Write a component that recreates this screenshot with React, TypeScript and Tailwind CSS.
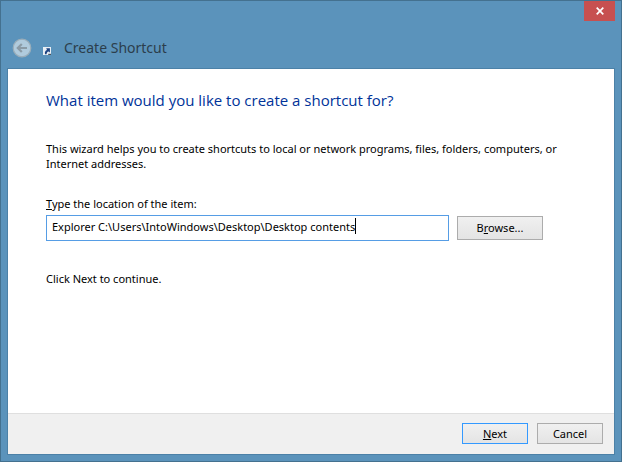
import React, { useState } from 'react';

interface WizardButtonProps {
  className?: string;
  children: React.ReactNode;
}

const WizardButton: React.FC<WizardButtonProps> = ({ className = '', children }) => {
  return (
    <button
      type="button"
      className={`border bg-linear-to-b from-[#f0f0f0] to-[#e4e4e4] text-center text-[11px] leading-4 text-black ${className}`}
    >
      {children}
    </button>
  );
};

const BackIcon: React.FC = () => {
  return (
    <svg viewBox="0 0 20 20" className="size-5" fill="none" aria-hidden="true">
      <circle cx="10" cy="10" r="8.8" fill="#b0cbdd" stroke="#9aadb9" strokeWidth="1.2" />
      <path d="M15 10H6M9.8 6l-4 4 4 4" stroke="#8b9ba6" strokeWidth="2.2" />
    </svg>
  );
};

const ShortcutIcon: React.FC = () => {
  return (
    <svg viewBox="0 0 8 8" className="size-2" aria-hidden="true">
      <rect width="8" height="8" fill="#e9eff4" />
      <path d="M2 7.2C1.6 5 2.4 3.6 4 3.1L3.2 1.2H6.9V5.4L5.6 4.4C4.2 4.7 3.6 5.6 3.6 7.2Z" fill="#1d4382" />
      <path d="M5.2 8V6.8H8V8Z" fill="#4b5560" />
    </svg>
  );
};

const TitleBar: React.FC = () => {
  return (
    <header className="pb-2.5">
      <div className="flex h-5 justify-end">
        <button type="button" aria-label="Close" className="-mr-px flex w-[31px] items-center justify-center bg-[#c75050]">
          <svg viewBox="0 0 8 8" className="size-2" aria-hidden="true">
            <path d="M0.7 0.7L7.3 7.3M7.3 0.7L0.7 7.3" stroke="#fff" strokeWidth="1.7" />
          </svg>
        </button>
      </div>
      <div className="mt-4 flex h-[22px] items-center pl-1">
        <button type="button" aria-label="Back" disabled>
          <BackIcon />
        </button>
        <span className="ml-[11px] pt-1.5">
          <ShortcutIcon />
        </span>
        <h1 className="ml-[13px] text-[14px] leading-5 text-[#2c3e4c]">Create Shortcut</h1>
      </div>
    </header>
  );
};

export default function App() {
  const [location, setLocation] = useState('Explorer C:\\Users\\IntoWindows\\Desktop\\Desktop contents');

  return (
    <div className="flex min-h-screen flex-col border border-[#44718f] bg-[#5b93bb] px-[7px] pb-[7px] font-['Noto_Sans','Open_Sans',sans-serif] text-[11px] leading-[15px] text-black">
      <TitleBar />
      <main className="flex flex-1 flex-col bg-white shadow-[0_0_0_1px_#4c81a7]">
        <div className="flex-1 pr-9 pl-[38px] pt-5">
          <h2 className="font-['Open_Sans','Noto_Sans',sans-serif] text-[15px] leading-[22px] text-[#003399]">
            What item would you like to create a shortcut for?
          </h2>
          <p className="mt-[30px]">
            This wizard helps you to create shortcuts to local or network programs, files, folders, computers, or Internet addresses.
          </p>
          <label htmlFor="location" className="mt-[25px] block">
            <u>T</u>ype the location of the item:
          </label>
          <div className="mt-1 flex items-center gap-2">
            <div className="flex h-[26px] flex-1 items-start border border-[#569de5] bg-white pt-[2px] pl-[5px]">
              <input
                id="location"
                type="text"
                value={location}
                onChange={(e) => setLocation(e.target.value)}
                className="h-4 max-w-full [field-sizing:content] outline-none"
              />
              <span className="h-4 w-px bg-black" />
            </div>
            <WizardButton className="mr-[35px] h-6 w-[86px] border-[#acacac]">
              B<u>r</u>owse...
            </WizardButton>
          </div>
          <p className="mt-[30px]">Click Next to continue.</p>
        </div>
        <footer className="flex h-[41px] justify-end gap-[9px] border-t border-[#dfdfdf] bg-[#f0f0f0] pt-[9px] pr-[11px]">
          <WizardButton className="h-[21px] w-[66px] border-[#3399ff]">
            <u>N</u>ext
          </WizardButton>
          <WizardButton className="h-[21px] w-[66px] border-[#acacac]">Cancel</WizardButton>
        </footer>
      </main>
    </div>
  );
}
